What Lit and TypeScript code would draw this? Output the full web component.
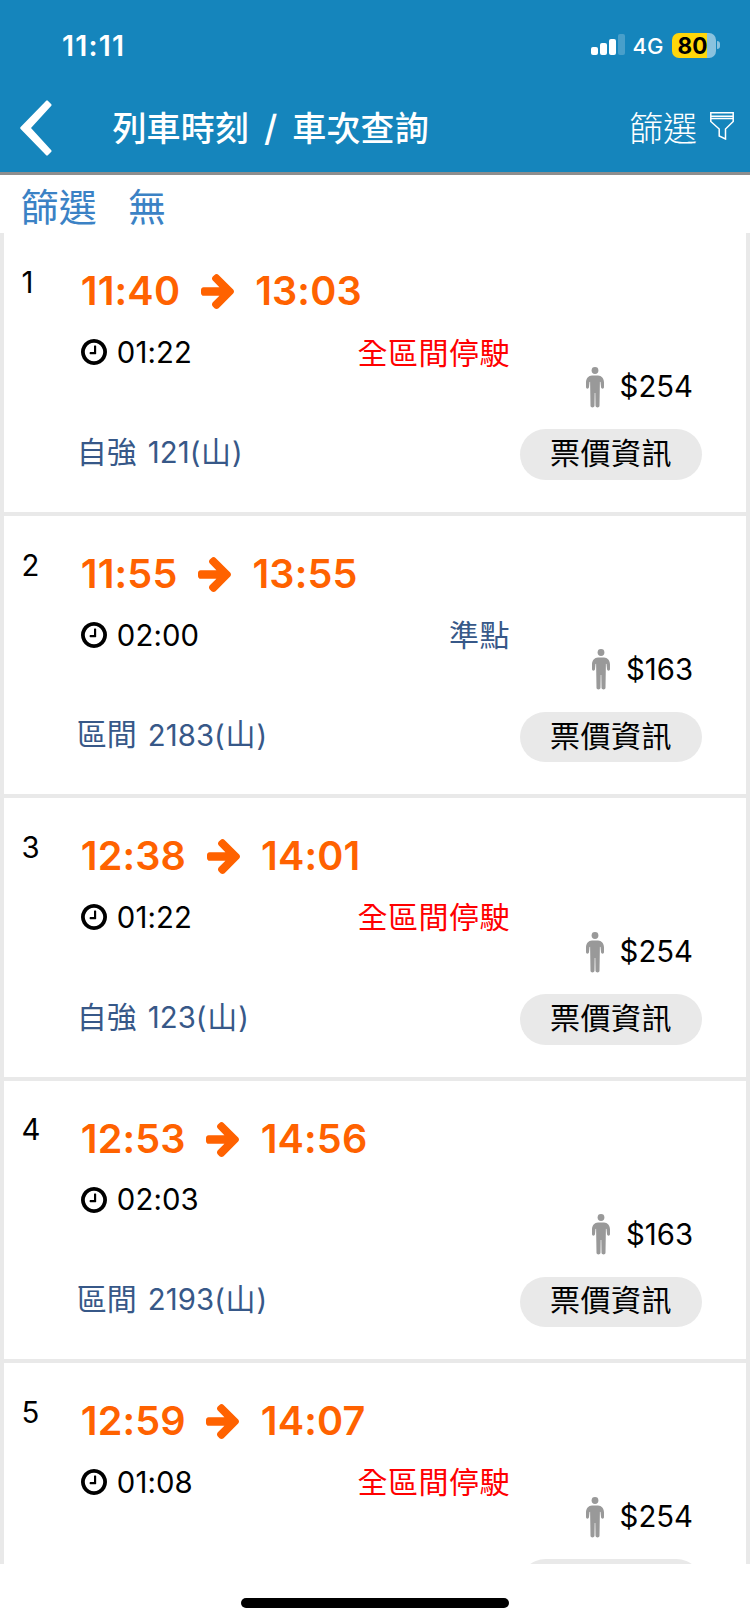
import { LitElement, html, css, svg, nothing } from "lit";
import { customElement, property } from "lit/decorators.js";

interface Train {
  depart: string;
  arrive: string;
  duration: string;
  status: string;
  late: boolean;
  kind: string;
  no: string;
  fare: string;
  action: string;
}

const STOPPED = "全區間停駛";
const FARES = "票價資訊";

const TRAINS: Train[] = [
  { depart: "11:40", arrive: "13:03", duration: "01:22", status: STOPPED, late: true, kind: "自強", no: "121", fare: "$254", action: FARES },
  { depart: "11:55", arrive: "13:55", duration: "02:00", status: "準點", late: false, kind: "區間", no: "2183", fare: "$163", action: FARES },
  { depart: "12:38", arrive: "14:01", duration: "01:22", status: STOPPED, late: true, kind: "自強", no: "123", fare: "$254", action: FARES },
  { depart: "12:53", arrive: "14:56", duration: "02:03", status: "", late: false, kind: "區間", no: "2193", fare: "$163", action: FARES },
  { depart: "12:59", arrive: "14:07", duration: "01:08", status: STOPPED, late: true, kind: "", no: "", fare: "$254", action: "" },
];

const arrowIcon = svg`<path d="M1600 960q0 54-37 91l-651 651q-39 37-91 37-51 0-90-37l-75-75q-38-38-38-91t38-91l293-293H245q-52 0-84.500-37.500T128 1024V896q0-53 32.500-90.500T245 768h704L656 474q-38-36-38-90t38-90l75-75q38-38 90-38 53 0 91 38l651 651q37 35 37 90z"/>`;
const clockIcon = svg`<path d="M1024 544v448q0 14-9 23t-23 9H672q-14 0-23-9t-9-23v-64q0-14 9-23t23-9h224V544q0-14 9-23t23-9h64q14 0 23 9t9 23zm416 352q0-148-73-273t-198-198-273-73-273 73-198 198-73 273 73 273 198 198 273 73 273-73 198-198 73-273zm224 0q0 209-103 385.500T1281.500 1561 896 1664t-385.500-103T231 1281.500 128 896t103-385.500T510.500 231 896 128t385.500 103T1561 510.500 1664 896z"/>`;

@customElement("train-card")
export class TrainCard extends LitElement {
  @property({ attribute: false }) train!: Train;
  @property({ type: Number }) index = 0;

  static styles = css`
    :host {
      display: block;
      box-sizing: border-box;
      height: 282.4px;
      border-bottom: 4px solid #e9e9e9;
      font-size: 30px;
      color: #000;
    }
    svg { display: block; flex: none; }
    .card { display: flex; height: 100%; box-sizing: border-box; padding-top: .4px; }
    .index { width: 58px; padding: 31.300px 0 0 17.500px; box-sizing: border-box; line-height: 36px; font-size: 29.3px; }
    .main { width: 446px; margin-left: 14px; display: flex; flex-direction: column; }
    .times { display: flex; align-items: center; height: 48px; margin: 33.500px 0 0 5px; font-size: 39.6px; font-weight: 600; letter-spacing: .15px; color: #ff6200; }
    .arrow { width: 33px; height: 35px; margin: 1px 21.500px 0 20.500px; fill: #ff6200; }
    .second { display: flex; align-items: center; height: 40px; margin-top: 16.500px; padding-left: 5px; }
    .clock { width: 26px; height: 26px; margin: 1px 10px 0 0; }
    .num { font-size: 29.3px; margin-top: 1.500px; letter-spacing: .1px; }
    .status { margin-left: auto; margin-right: 10px; margin-top: -2.500px; letter-spacing: .5px; }
    .ok { color: #375888; }
    .stopped { color: #ff0000; }
    .name { display: flex; align-items: center; height: 40px; margin: 60px 0 0 1px; color: #375888; white-space: pre; }
    .kind { margin: -4px 2.500px 0 0; }
    .line { margin: -4px 1px 0 .5px; }
    .side { flex: 1; display: flex; flex-direction: column; align-items: flex-end; }
    .fare { display: flex; align-items: center; height: 42px; margin: 132.600px 53px 0 0; }
    .fare .num { margin-top: -1px; letter-spacing: 0; }
    .person { width: 18px; height: 41px; margin-right: 16px; fill: #999; }
    .info { display: flex; align-items: center; justify-content: center; width: 182px; height: 50.500px; margin: 21px 44px 0 0; padding: 0; border: 0; border-radius: 26px; background: #e9e9e9; font: inherit; letter-spacing: .5px; color: #000; }
    .label { padding-bottom: 7px; }
  `;

  render() {
    const t = this.train;
    return html`<div class="card">
      <div class="index">${this.index}</div>
      <div class="main">
        <div class="times">
          <span>${t.depart}</span>
          <svg class="arrow" viewBox="128 181 1472 1558">${arrowIcon}</svg>
          <span>${t.arrive}</span>
        </div>
        <div class="second">
          <svg class="clock" viewBox="128 128 1536 1536">${clockIcon}</svg>
          <span class="num">${t.duration}</span>
          ${t.status ? html`<span class="status ${t.late ? "stopped" : "ok"}">${t.status}</span>` : nothing}
        </div>
        ${t.kind
          ? html`<div class="name"><span class="kind">${t.kind}</span><span class="num"> ${t.no}(</span><span class="line">山</span><span class="num">)</span></div>`
          : nothing}
      </div>
      <div class="side">
        <div class="fare">
          <svg class="person" viewBox="0 0 18 41">
            <circle cx="9" cy="3.500" r="3.400"/>
            <path d="M6 8.500h6c3.500 0 6 3 6 7v4.500c0 2.200-2.800 2.200-3 0l-.5-5-.6-.3-.4 24c0 2.300-3.800 2.300-4 0L9.300 26h-.6L8.500 38.700c-.2 2.300-4 2.300-4 0l-.4-24-.6.3-.5 5c-.2 2.200-3 2.200-3 0v-4.500c0-4 2.500-7 6-7z"/>
          </svg>
          <span class="num">${t.fare}</span>
        </div>
        <button class="info">${t.action ? html`<span class="label">${t.action}</span>` : nothing}</button>
      </div>
    </div>`;
  }
}

@customElement("app-root")
export class AppRoot extends LitElement {
  static styles = css`
    :host {
      display: flex;
      flex-direction: column;
      width: 750px;
      height: 1624px;
      overflow: hidden;
      background: #fff;
      font-family: Inter, "Noto Sans CJK TC", sans-serif;
    }
    svg { display: block; flex: none; }
    .header { background: #1585bc; height: 172px; border-bottom: 3px solid #8e8e8e; color: #fff; flex: none; }
    .statusbar { display: flex; align-items: center; height: 90px; padding: 0 30.500px 0 62px; }
    .clock { font-size: 28.500px; font-weight: 600; flex: 1; letter-spacing: 1.200px; }
    .net { font-size: 22px; font-weight: 500; margin: 1px 8px 0 7px; }
    .signal { width: 35px; height: 22px; }
    .battery { display: flex; align-items: center; }
    .cell { width: 44px; height: 25px; border-radius: 7px; background: linear-gradient(to right, #ffd60a 35px, #8ac2de 35px); color: #000; font-size: 22.500px; line-height: 25px; font-weight: 700; text-align: center; padding-right: 2px; box-sizing: border-box; }
    .nub { width: 3px; height: 8px; margin-left: 1px; border-radius: 0 4px 4px 0; background: #8ac2de; }
    .nav { display: flex; align-items: center; height: 76px; padding: 0 16px 0 20px; }
    .back { width: 32px; height: 56px; margin-right: 60.500px; fill: #fff; }
    .title { display: flex; align-items: center; gap: 15px; flex: 1; font-size: 34px; font-weight: 500; letter-spacing: .1px; padding-bottom: 4px; }
    .slash { font-size: 36px; padding-top: 4px; line-height: 42px; }
    .filter { font-size: 34px; font-weight: 300; margin-right: 13px; padding-bottom: 4px; }
    .funnel { width: 24px; height: 28px; margin-bottom: 5px; fill: none; stroke: #fff; stroke-width: 1.500; }
    .filterbar { display: flex; align-items: center; gap: 31px; height: 58px; padding: 6px 0 0 20.500px; box-sizing: border-box; flex: none; font-size: 38px; letter-spacing: .3px; line-height: 50px; color: #3b82c5; }
    .list { flex: none; height: 1331px; box-sizing: border-box; padding-top: .5px; border: solid #e9e9e9; border-width: 0 4px; overflow: hidden; }
    .home { flex: 1; display: flex; justify-content: center; padding-top: 34px; }
    .bar { width: 268px; height: 10px; border-radius: 5px; background: #000; }
  `;

  render() {
    return html`
      <header class="header">
        <div class="statusbar">
          <span class="clock">11:11</span>
          <svg class="signal" viewBox="0 0 35 22" fill="#fff">
            <rect x="0" y="13" width="7" height="8" rx="2"/>
            <rect x="9" y="9" width="7" height="12" rx="2"/>
            <rect x="18" y="5" width="7" height="16" rx="2"/>
            <rect x="27" y="0" width="7" height="21" rx="2" opacity=".22"/>
          </svg>
          <span class="net">4G</span>
          <div class="battery"><div class="cell">80</div><div class="nub"></div></div>
        </div>
        <nav class="nav">
          <svg class="back" viewBox="0 0 32 56"><path d="M26.200.7Q27 0 27.800.7L31.300 4.200Q32 5 31.300 5.800L11 28 31.300 50.200Q32 51 31.300 51.800L27.800 55.300Q27 56 26.200 55.300L.4 28.700Q0 28 .4 27.300z"/></svg>
          <span class="title"><span>列車時刻</span><span class="slash">/</span><span>車次查詢</span></span>
          <span class="filter">篩選</span>
          <svg class="funnel" viewBox="0 0 24 28"><path d="M.8.8h22.400v8.700L15.500 17v10l-6.300-3V17L.8 9.500z"/><path d="M1 4.200h22M1 6.500h22"/></svg>
        </nav>
      </header>
      <div class="filterbar"><span>篩選</span><span>無</span></div>
      <main class="list">
        ${TRAINS.map((t, i) => html`<train-card .train=${t} .index=${i + 1}></train-card>`)}
      </main>
      <footer class="home"><div class="bar"></div></footer>
    `;
  }
}
